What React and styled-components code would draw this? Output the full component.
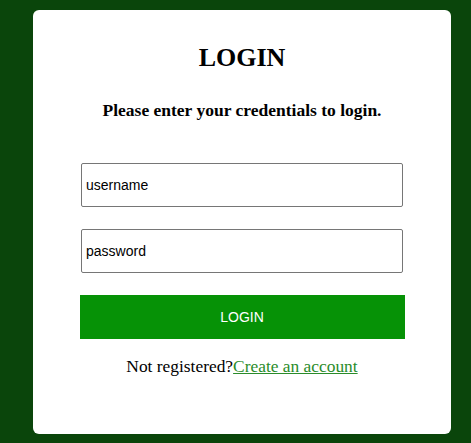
import styled, { createGlobalStyle } from 'styled-components';

const GlobalStyle = createGlobalStyle`
  html, body {
    margin: 0;
    padding: 0;
    background: #0a450b;
    font-family: "Liberation Serif", "Times New Roman", serif;
  }
`;

const Page = styled.div`
  width: 471px;
  height: 443px;
  padding: 10px 0 0 33px;
  box-sizing: border-box;
`;

const Card = styled.div`
  width: 418px;
  height: 424px;
  background: #fff;
  border-radius: 6px;
  box-sizing: border-box;
  padding-top: 33px;
  display: flex;
  flex-direction: column;
  align-items: center;
`;

const Title = styled.h2`
  margin: 0;
  font-size: 26px;
  font-weight: bold;
  line-height: 30px;
`;

const Subtitle = styled.h4`
  margin: 27px 0 0;
  font-size: 17.5px;
  font-weight: bold;
  line-height: 20px;
`;

const Form = styled.form`
  margin-top: 43px;
  width: 325px;
  display: flex;
  flex-direction: column;
  align-items: center;
`;

const Input = styled.input`
  width: 322px;
  height: 44px;
  box-sizing: border-box;
  border: 1px solid #767676;
  border-radius: 2px;
  padding: 0 4px;
  margin-bottom: 22px;
  font-family: "Liberation Sans", Arial, sans-serif;
  font-size: 14px;
  color: #000;

  &::placeholder {
    color: #000;
  }
`;

const Button = styled.button`
  width: 325px;
  height: 44px;
  border: none;
  background: #069206;
  color: #fff;
  font-family: "Liberation Sans", Arial, sans-serif;
  font-size: 14px;
  cursor: pointer;
`;

const Footer = styled.p`
  margin: 16px 0 0;
  font-size: 17.4px;
  line-height: 22px;

  a {
    color: #2a8c2a;
    text-decoration: underline;
  }
`;

const App = () => {
  return (
    <Page>
      <GlobalStyle />
      <Card>
        <Title>LOGIN</Title>
        <Subtitle>Please enter your credentials to login.</Subtitle>
        <Form onSubmit={(e) => e.preventDefault()}>
          <Input type='text' placeholder='username' />
          <Input type='password' placeholder='password' />
          <Button type='submit'>LOGIN</Button>
        </Form>
        <Footer>
          Not registered?<a href='#'>Create an account</a>
        </Footer>
      </Card>
    </Page>
  );
};

export default App;
